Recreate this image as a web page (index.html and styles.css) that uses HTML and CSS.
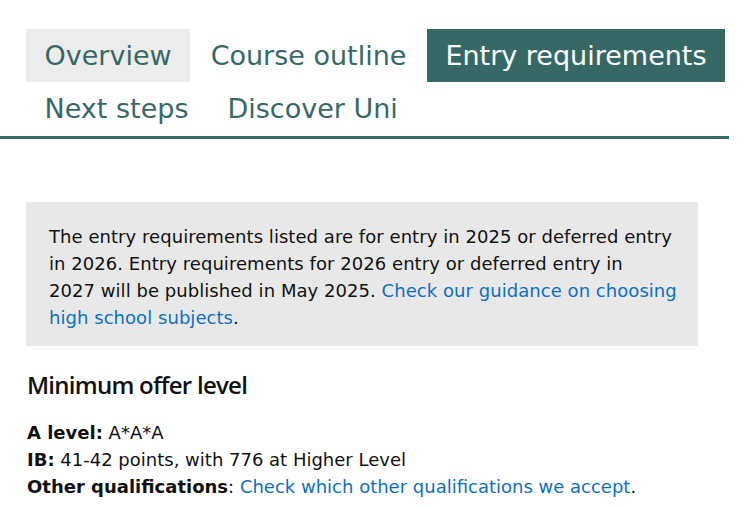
FILE: index.html
```html
<!DOCTYPE html>
<html lang="en">
<head>
<meta charset="utf-8">
<title>Entry requirements</title>
<link rel="stylesheet" href="styles.css">
</head>
<body>
<div class="page">
  <nav class="tabs">
    <a class="tab tab-light" href="#">Overview</a>
    <a class="tab" href="#">Course outline</a>
    <a class="tab tab-active" href="#">Entry requirements</a>
    <a class="tab" href="#">Next steps</a>
    <a class="tab" href="#">Discover Uni</a>
  </nav>
  <main class="content">
    <div class="notice">
      <p>The entry requirements listed are for entry in 2025 or deferred entry in 2026. Entry requirements for 2026 entry or deferred entry in <span class="keep">2027 will be</span> published in May 2025. <a href="#">Check our guidance on choosing high school subjects</a>.</p>
    </div>
    <h2 class="heading">Minimum offer level</h2>
    <ul class="offers">
      <li><strong>A level:</strong> A*A*A</li>
      <li><strong>IB:</strong> 41-42 points, with 776 at Higher Level</li>
      <li><strong>Other qualifications</strong>: <a href="#">Check which other qualifications we accept</a>.</li>
    </ul>
  </main>
</div>
</body>
</html>
```
FILE: styles.css
```css
html, body {
  margin: 0;
  padding: 0;
  background: #ffffff;
}
body {
  font-family: "DejaVu Sans", Verdana, sans-serif;
  color: #1a1a1a;
}
.page {
  width: 729px;
}
.tabs {
  display: flex;
  flex-wrap: wrap;
  column-gap: 2px;
  padding: 29px 0 1px 26px;
  border-bottom: 3px solid #366966;
}
.tab {
  display: block;
  height: 53px;
  line-height: 53px;
  padding: 0 18.5px;
  font-size: 27px;
  color: #366966;
  text-decoration: none;
  white-space: nowrap;
}
.tab-light {
  background: #ececec;
}
.tab-active {
  background: #366966;
  color: #ffffff;
}
.content {
  padding: 63px 0 0 26px;
}
.notice {
  width: 672px;
  box-sizing: border-box;
  background: #e8e8e8;
  padding: 21px 19px 15px 23px;
}
.notice p {
  margin: 0;
  font-size: 18px;
  line-height: 27px;
  letter-spacing: 0.05px;
  color: #111111;
}
.keep {
  white-space: nowrap;
}
a {
  color: #0b6fc7;
  text-decoration: none;
}
.heading {
  margin: 24px 0 0 1px;
  font-family: "Open Sans", sans-serif;
  font-weight: 600;
  font-size: 24px;
  line-height: 29px;
  letter-spacing: -0.75px;
  color: #111111;
}
.offers {
  list-style: none;
  margin: 20px 0 0 1px;
  padding: 0;
  font-size: 18px;
  line-height: 27px;
  color: #111111;
}
.offers strong {
  font-weight: bold;
}
```
